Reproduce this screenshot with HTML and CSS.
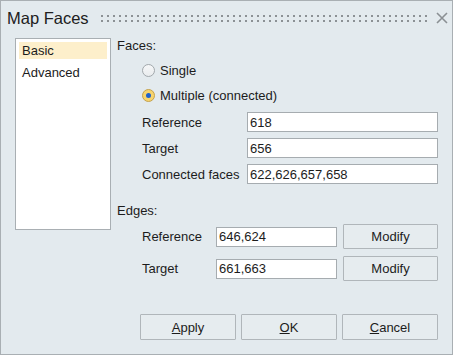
FILE: index.html
```html
<!DOCTYPE html>
<html lang="en">
<head>
    <meta charset="UTF-8">
    <title>Map Faces</title>
    <link rel="stylesheet" href="styles.css">
</head>
<body>
    <div class="dialog">
        <div class="titlebar">
            <span class="title">Map Faces</span>
            <span class="grip"></span>
            <svg class="close" width="12" height="12" viewBox="0 0 12 12">
                <path d="M1 1L11 11M11 1L1 11" stroke="#8b9094" stroke-width="1.6" fill="none"/>
            </svg>
        </div>
        <div class="main">
            <ul class="pages">
                <li class="page selected">Basic</li>
                <li class="page">Advanced</li>
            </ul>
            <div class="panel">
                <div class="heading">Faces:</div>
                <label class="radio-row first">
                    <span class="radio"></span>Single
                </label>
                <label class="radio-row">
                    <span class="radio checked"></span>Multiple (connected)
                </label>
                <div class="fields">
                    <div class="field"><span class="lbl">Reference</span><input class="txt" value="618"></div>
                    <div class="field"><span class="lbl">Target</span><input class="txt" value="656"></div>
                    <div class="field"><span class="lbl">Connected faces</span><input class="txt" value="622,626,657,658"></div>
                </div>
                <div class="heading edges">Edges:</div>
                <div class="edge-row first">
                    <span class="lbl short">Reference</span>
                    <input class="txt short" value="646,624">
                    <button class="btn modify">Modify</button>
                </div>
                <div class="edge-row">
                    <span class="lbl short">Target</span>
                    <input class="txt short" value="661,663">
                    <button class="btn modify">Modify</button>
                </div>
                <div class="footer">
                    <button class="btn big"><u>A</u>pply</button>
                    <button class="btn big"><u>O</u>K</button>
                    <button class="btn big"><u>C</u>ancel</button>
                </div>
            </div>
        </div>
    </div>
</body>
</html>
```
FILE: styles.css
```css
*{
    margin: 0;
    padding: 0;
    box-sizing: border-box;
}
body{
    font-family: "Liberation Sans", Arial, sans-serif;
    font-size: 13px;
    color: #1c1c1c;
    background: #e3eaee;
}
.dialog{
    width: 453px;
    height: 355px;
    border: 1px solid #a9afb3;
    background: #e3eaee;
    display: flex;
    flex-direction: column;
}
.titlebar{
    height: 34px;
    display: flex;
    align-items: center;
    padding: 0 4px 0 6px;
}
.title{
    font-size: 16.5px;
    color: #202020;
}
.grip{
    flex: 1;
    height: 7px;
    margin: 0 8px 0 12px;
    background:
        linear-gradient(90deg, #8c9195 2px, transparent 2px) 0 0 / 6px 2px repeat-x,
        linear-gradient(90deg, #8c9195 2px, transparent 2px) 0 100% / 6px 2px repeat-x;
}
.close{
    display: block;
}
.main{
    flex: 1;
    display: flex;
    gap: 6px;
    padding: 3px 14px 0 14px;
}
.pages{
    list-style: none;
    width: 96px;
    height: 192px;
    background: #fff;
    border: 1px solid #a9afb3;
    padding: 3px;
}
.page{
    height: 17px;
    line-height: 17px;
    padding-left: 3px;
    margin-bottom: 5px;
}
.page.selected{
    background: #fdefcb;
}
.panel{
    flex: 1;
    display: flex;
    flex-direction: column;
}
.heading{
    line-height: 16px;
    height: 16px;
}
.heading.edges{
    margin-top: 19px;
}
.radio-row{
    height: 18px;
    display: flex;
    align-items: center;
    padding-left: 25px;
    margin-top: 7px;
}
.radio-row.first{
    margin-top: 7px;
}
.radio{
    width: 13px;
    height: 13px;
    border-radius: 50%;
    border: 1px solid #a2a8ac;
    background: linear-gradient(#f6f7f8, #e9ecee);
    margin-right: 5px;
    position: relative;
}
.radio.checked{
    border-color: #c4a24e;
    background: #f7d46e;
}
.radio.checked::after{
    content: "";
    position: absolute;
    left: 3px;
    top: 3px;
    width: 5px;
    height: 5px;
    border-radius: 50%;
    background: #1f62cc;
}
.fields{
    display: flex;
    flex-direction: column;
    gap: 6px;
    margin-top: 8px;
    padding-left: 25px;
}
.field{
    display: flex;
    align-items: center;
    height: 20px;
}
.lbl{
    width: 105px;
}
.lbl.short{
    width: 74px;
}
.txt{
    flex: 1;
    height: 20px;
    border: 1px solid #a6acb0;
    background: #fff;
    font: inherit;
    color: #1c1c1c;
    padding: 0 2px;
    outline: none;
}
.txt.short{
    flex: none;
    width: 121px;
}
.edge-row{
    display: flex;
    align-items: center;
    height: 25px;
    padding-left: 25px;
    margin-top: 7px;
}
.edge-row.first{
    margin-top: 5px;
}
.btn{
    font: inherit;
    color: #1c1c1c;
    background: #e6ecef;
    border: 1px solid #b0b6ba;
    border-radius: 1px;
}
.modify{
    width: 95px;
    height: 25px;
    margin-left: 6px;
}
.footer{
    display: flex;
    justify-content: flex-end;
    gap: 5px;
    margin-top: 33px;
}
.big{
    width: 96px;
    height: 26px;
}
```
